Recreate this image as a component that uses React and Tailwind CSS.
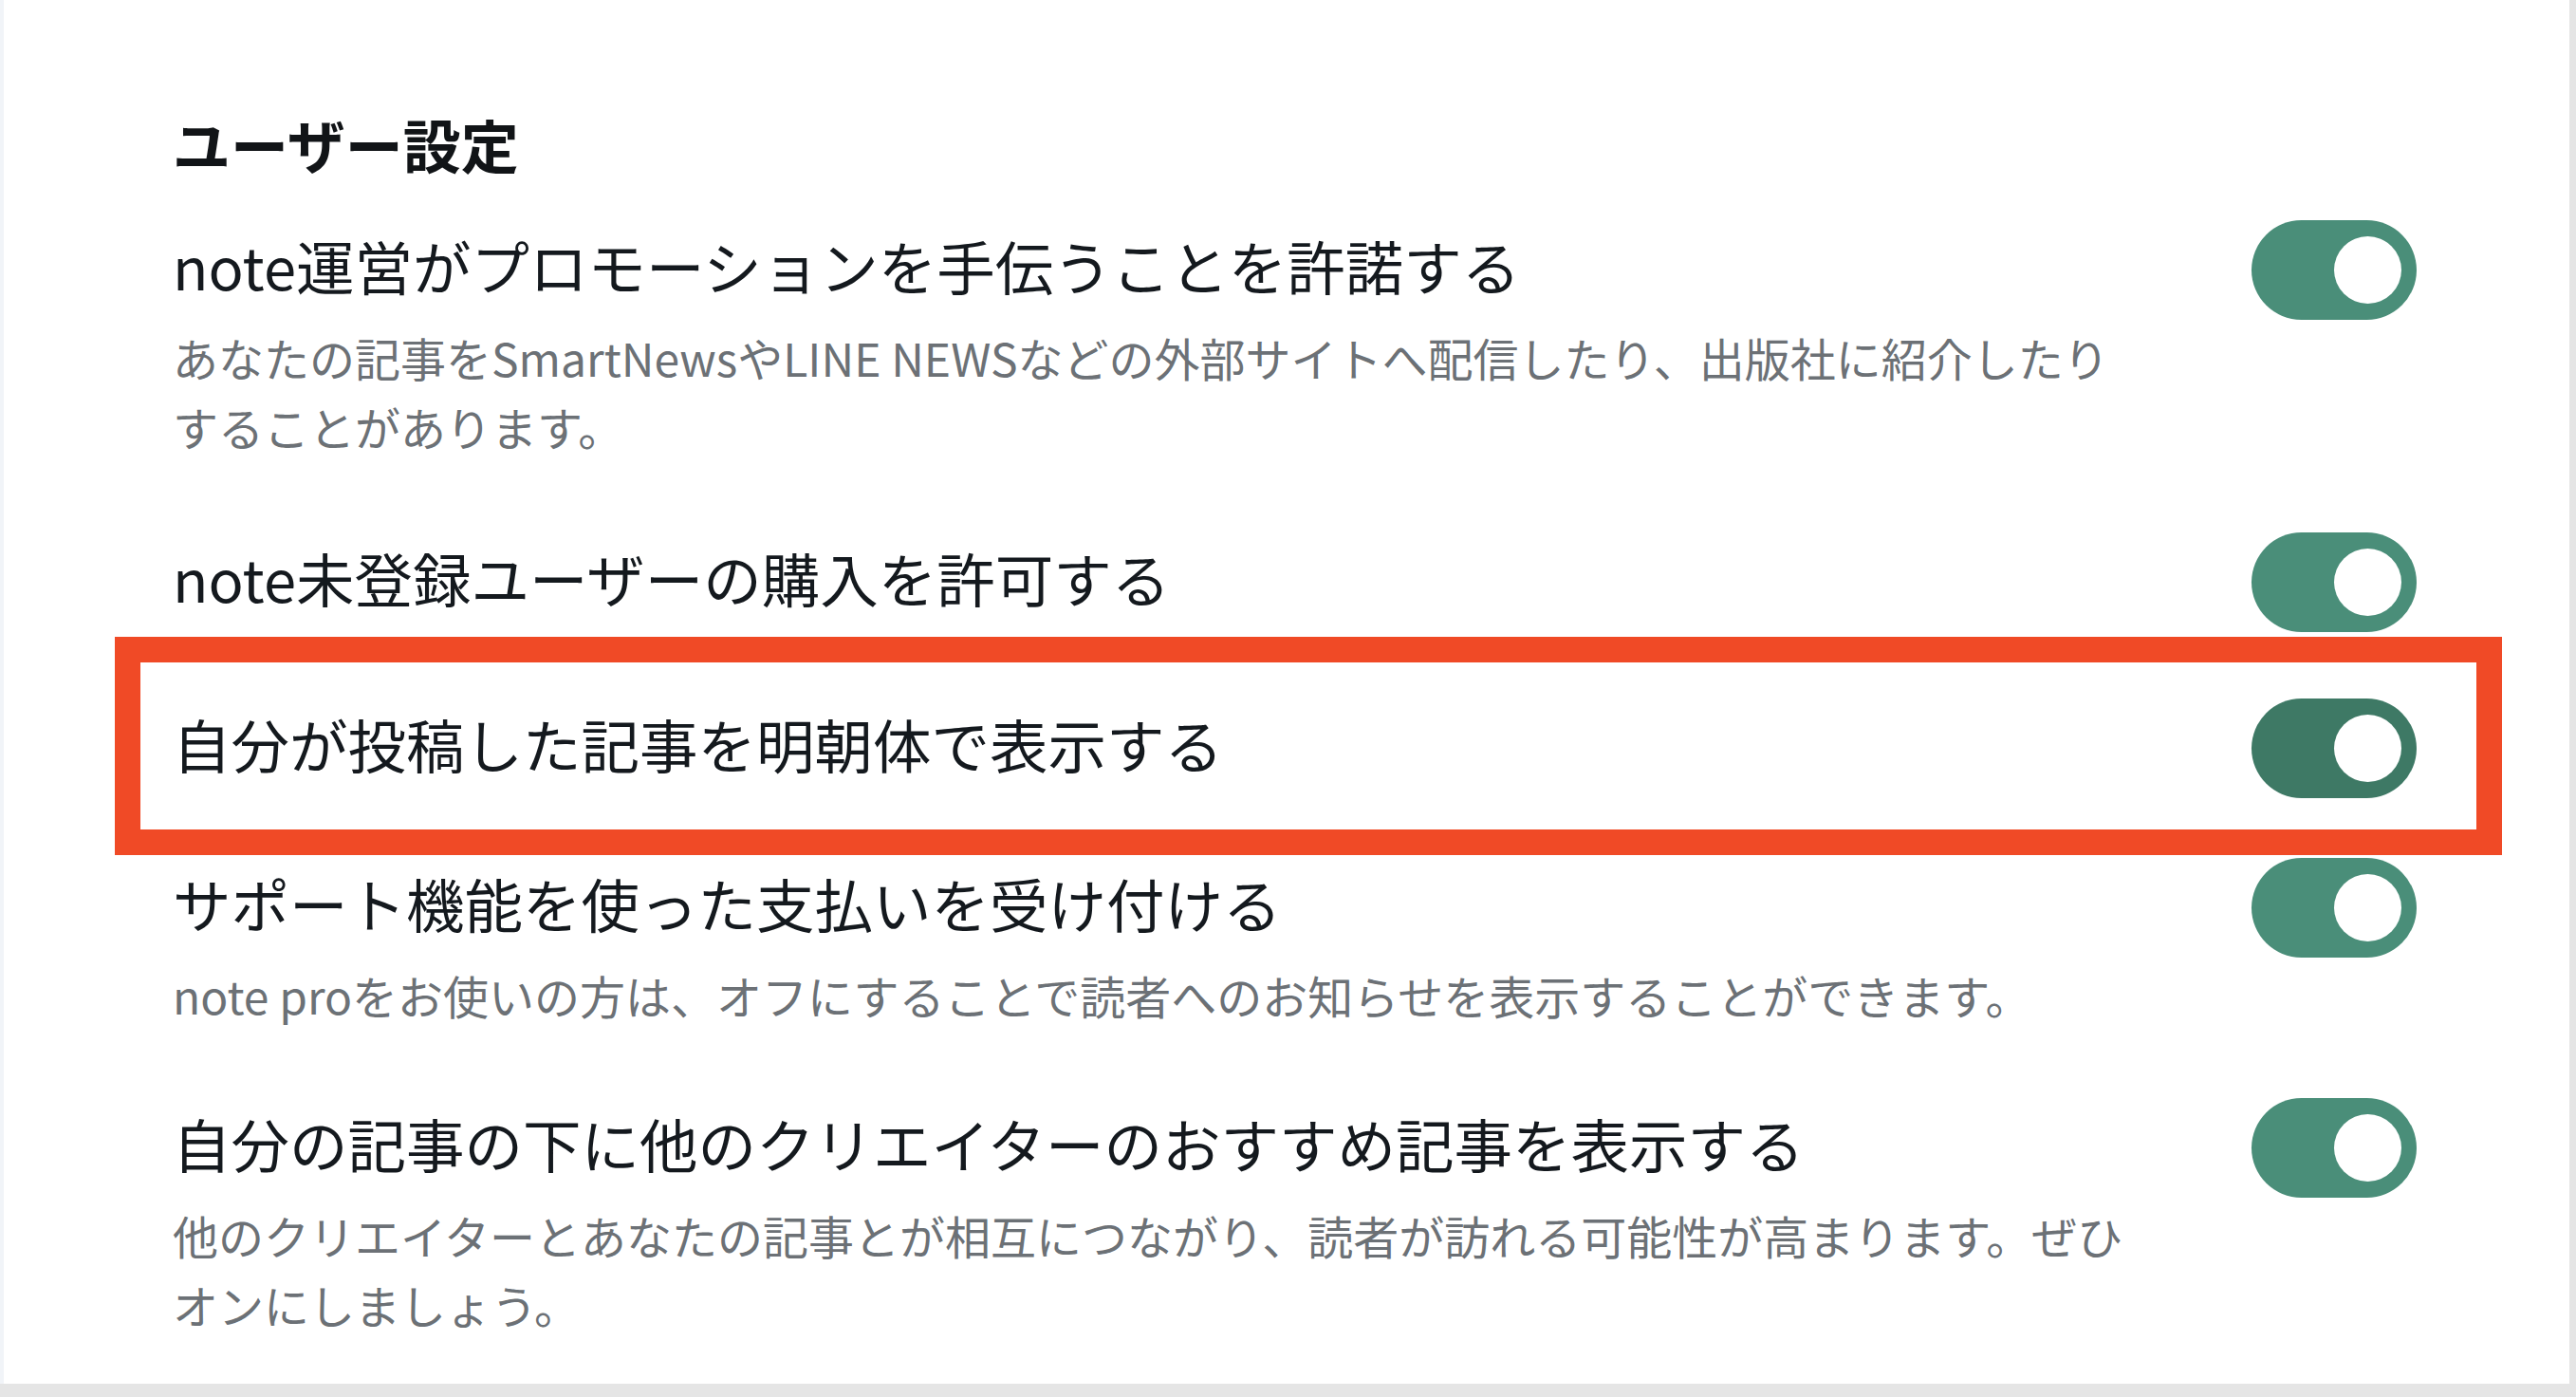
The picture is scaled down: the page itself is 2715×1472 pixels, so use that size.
const FONT = "font-['Noto_Sans_CJK_JP','Noto_Sans',sans-serif]";

const settings = [
  {
    id: "promotion",
    title: "note運営がプロモーションを手伝うことを許諾する",
    desc: "あなたの記事をSmartNewsやLINE NEWSなどの外部サイトへ配信したり、出版社に紹介したりすることがあります。",
    gap: "mt-0",
  },
  {
    id: "guest",
    title: "note未登録ユーザーの購入を許可する",
    gap: "mt-[75px]",
  },
  {
    id: "mincho",
    title: "自分が投稿した記事を明朝体で表示する",
    highlight: true,
    gap: "mt-[70px]",
  },
  {
    id: "support",
    title: "サポート機能を使った支払いを受け付ける",
    desc: "note proをお使いの方は、オフにすることで読者へのお知らせを表示することができます。",
    gap: "mt-[63px]",
  },
  {
    id: "recommend",
    title: "自分の記事の下に他のクリエイターのおすすめ記事を表示する",
    desc: "他のクリエイターとあなたの記事とが相互につながり、読者が訪れる可能性が高まります。ぜひオンにしましょう。",
    gap: "mt-[72px]",
  },
];

// ─── Toggle ──────────────────────────────────────────────────────────────────

function Toggle({ dark }) {
  return (
    <button
      role="switch"
      aria-checked="true"
      className={`flex h-[105px] w-[174px] shrink-0 items-center justify-end rounded-full pr-[16px] ${
        dark ? "bg-[#3e7965]" : "bg-[#4a8e79]"
      }`}
    >
      <span className="block h-[71px] w-[71px] rounded-full bg-white" />
    </button>
  );
}

// ─── One setting row ─────────────────────────────────────────────────────────

function SettingRow({ item }) {
  return (
    <div className={`relative flex items-start justify-between ${item.gap}`}>
      <div className="min-w-0">
        <div className="text-[61.5px] leading-[96px] text-[#14191e]">{item.title}</div>
        {item.desc && (
          <p className="mt-[12px] max-w-[2070px] text-[48px] leading-[73px] text-[#6c7176]">
            {item.desc}
          </p>
        )}
      </div>
      <Toggle dark={item.highlight} />

      {/* annotation frame drawn over the highlighted row */}
      {item.highlight && (
        <div className="pointer-events-none absolute -bottom-[60px] -left-[61px] -right-[90px] -top-[65px] border-[27px] border-[#f04a26]" />
      )}
    </div>
  );
}

export default function App() {
  return (
    <div className={`flex h-[1472px] w-full flex-col bg-[#e5e5e5] ${FONT}`}>
      <div className="h-[1458px] w-[2708px] border-l-4 border-[#f1f4f8] bg-white pl-[178px] pr-[161px] pt-[107px]">
        <h2 className="text-[61px] font-bold leading-[90px] text-[#111417]">ユーザー設定</h2>
        <div className="mt-[35px] flex flex-col">
          {settings.map((item) => (
            <SettingRow key={item.id} item={item} />
          ))}
        </div>
      </div>
    </div>
  );
}
